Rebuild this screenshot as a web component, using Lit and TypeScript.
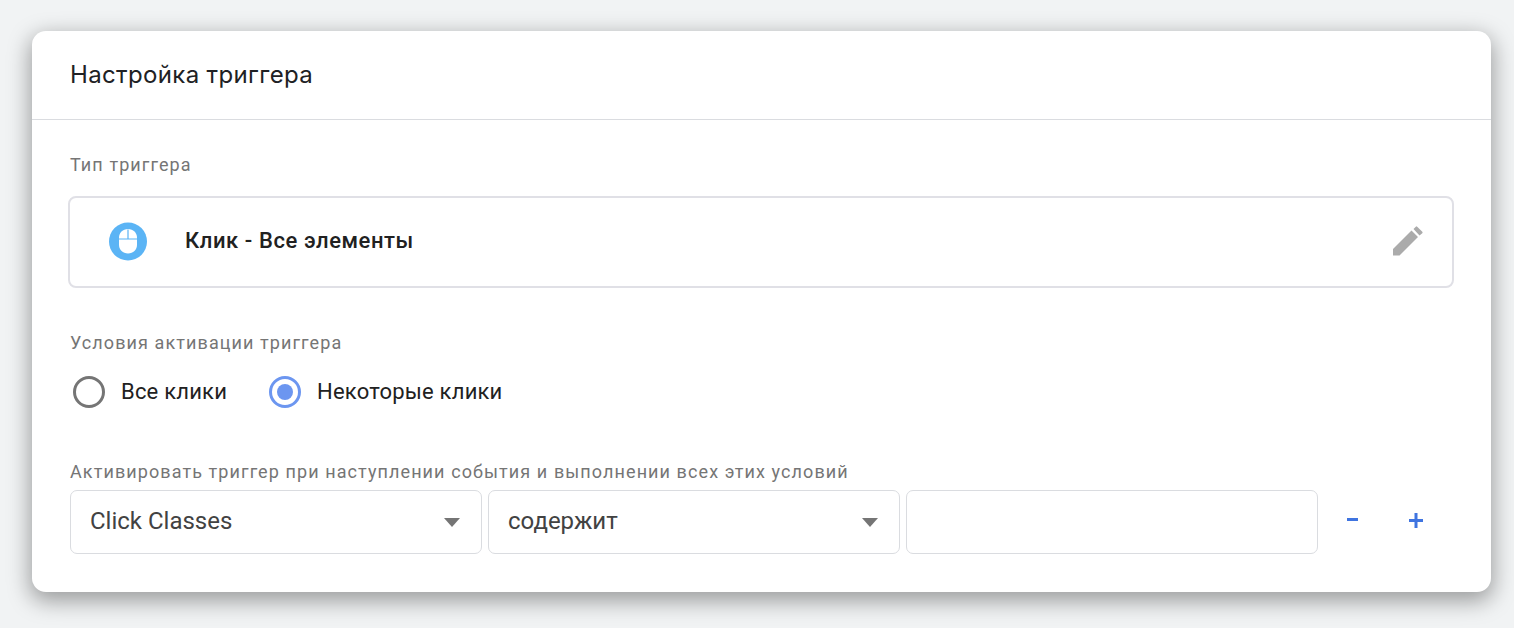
import { LitElement, html, css } from "lit";
import { customElement } from "lit/decorators.js";

const arrow = html`<svg class="arrow" width="16" height="9" viewBox="0 0 16 9"><path d="M0 0h16L8 9z" fill="#757575"/></svg>`;

@customElement("app-root")
export class AppRoot extends LitElement {
  static styles = css`
    :host { display: block; width: 1514px; height: 628px; background: #f1f3f4; overflow: hidden; font-family: Roboto, "Noto Sans", sans-serif; color: #212121; }
    .page { padding: 31px 23px 0 32px; }
    .card { width: 1459px; height: 561px; box-sizing: border-box; background: #fff; border-radius: 14px; box-shadow: 0 7px 22px 2px rgba(0,0,0,.36); }
    .head { height: 89px; box-sizing: border-box; border-bottom: 1px solid #dadce0; padding: 27px 0 0 38px; }
    h1 { margin: 0; font: 400 24px/34px Inter, Roboto, sans-serif; letter-spacing: .35px; color: #202124; }
    .body { padding: 34px 37px 0 38px; }
    .label { font-size: 18px; line-height: 22px; letter-spacing: 1.09px; color: #757575; }
    .type { margin: 20px 0 0 -2px; width: 1386px; height: 92px; box-sizing: border-box; border: 2px solid #e0e0e6; border-radius: 8px; display: flex; align-items: center; padding: 0 29px 2px 39px; }
    .type-icon { flex: none; display: block; }
    .type-name { margin-left: 38px; padding-bottom: 2px; flex: 1; font-size: 22px; font-weight: 500; letter-spacing: .58px; color: #212121; }
    .act { margin-top: 44px; }
    .radios { display: flex; align-items: center; margin-top: 22px; margin-left: 3px; height: 32px; }
    .radio { width: 32px; height: 32px; box-sizing: border-box; border-radius: 50%; border: 3px solid #757575; flex: none; display: flex; align-items: center; justify-content: center; }
    .radio.on { border-color: #6c96f0; margin-left: 42px; }
    .dot { width: 16px; height: 16px; border-radius: 50%; background: #6c96f0; }
    .rtext { margin-left: 16px; padding-bottom: 2px; font-size: 22px; letter-spacing: .2px; color: #212121; }
    .cond { margin-top: 53px; }
    .row { display: flex; align-items: center; gap: 6px; margin-top: 7px; }
    .field { width: 412px; height: 64px; box-sizing: border-box; border: 1px solid #dadce0; border-radius: 7px; display: flex; align-items: center; justify-content: space-between; padding: 0 21px 0 19px; font-size: 24px; color: #424242; }
    .field span { padding-bottom: 2px; }
    .arrow { flex: none; }
    .btns { display: flex; margin: -2px 0 0 21px; }
    .btn { width: 14px; display: block; }
    .plus { margin-left: 50px; }
  `;
  render() {
    return html`<div class="page"><div class="card">
      <div class="head"><h1>Настройка триггера</h1></div>
      <div class="body">
        <div class="label">Тип триггера</div>
        <div class="type">
          <svg class="type-icon" width="38" height="39" viewBox="0 0 38 39">
            <circle cx="19" cy="19.5" r="19" fill="#5bb4f5"/>
            <path fill="#fff" d="M19 7c5.200 0 9 3.800 9 8.500v7.500c0 4.800-3.800 8.500-9 8.500s-9-3.700-9-8.500v-7.500c0-4.700 3.800-8.500 9-8.500z"/>
            <path fill="none" stroke="#5bb4f5" stroke-width="1.200" d="M10 17h18M19 7.500V17"/>
          </svg>
          <div class="type-name">Клик - Все элементы</div>
          <svg width="30" height="30" viewBox="0 0 30 30"><path fill="#ababab" d="M0 29.500V23L18.500 4.500 25 11 6.500 29.500zM20.500 3l2.300-2.300a1 1 0 0 1 1.400 0l5.100 5.100a1 1 0 0 1 0 1.400L26.500 9.500z"/></svg>
        </div>
        <div class="label act">Условия активации триггера</div>
        <div class="radios">
          <div class="radio"></div><div class="rtext">Все клики</div>
          <div class="radio on"><div class="dot"></div></div><div class="rtext">Некоторые клики</div>
        </div>
        <div class="label cond">Активировать триггер при наступлении события и выполнении всех этих условий</div>
        <div class="row">
          <div class="field"><span>Click Classes</span>${arrow}</div>
          <div class="field"><span>содержит</span>${arrow}</div>
          <div class="field"></div>
          <div class="btns">
            <svg class="btn" width="14" height="16" viewBox="0 0 14 16"><rect x="2" y="5" width="11" height="3" fill="#3f74e0"/></svg>
            <svg class="btn plus" width="14" height="16" viewBox="0 0 14 16"><path d="M0 6h14v3H0zM5.500 0h3v15h-3z" fill="#3f74e0"/></svg>
          </div>
        </div>
      </div>
    </div></div>`;
  }
}
